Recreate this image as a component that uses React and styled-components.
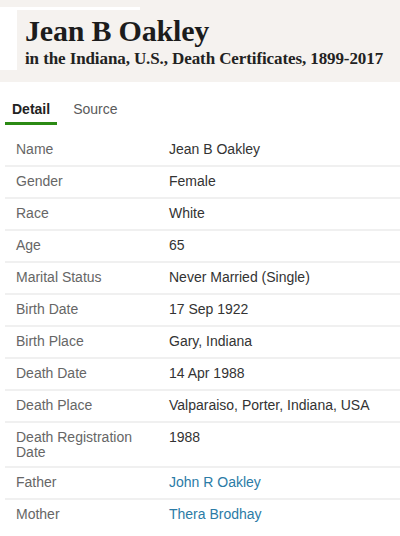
import React from "react";
import styled, { createGlobalStyle } from "styled-components";

const Global = createGlobalStyle`
  html, body { margin: 0; padding: 0; background: #ffffff; }
  body { font-family: "Liberation Sans", Arial, sans-serif; width: 400px; overflow: hidden; }
`;

const Page = styled.div`
  width: 400px;
  display: flex;
  flex-direction: column;
`;

const Header = styled.header`
  position: relative;
  background: #f5f2ef;
  height: 82px;
  box-sizing: border-box;
  padding: 14px 0 0 25px;
  display: flex;
  flex-direction: column;
  &::before {
    content: "";
    position: absolute;
    left: 0;
    top: 7px;
    width: 123px;
    height: 60px;
    border-top: 3px solid #ffffff;
    border-left: 17px solid #ffffff;
    pointer-events: none;
  }
`;

const Title = styled.h1`
  position: relative;
  margin: 0;
  font-family: "Liberation Serif", "Times New Roman", serif;
  font-weight: 700;
  font-size: 30px;
  line-height: 34px;
  color: #1c1c1c;
  letter-spacing: -0.2px;
`;

const Subtitle = styled.div`
  position: relative;
  font-family: "Liberation Serif", "Times New Roman", serif;
  font-weight: 700;
  font-size: 17px;
  line-height: 20px;
  color: #222222;
  margin-top: 1px;
  letter-spacing: -0.1px;
`;

const Tabs = styled.nav`
  display: flex;
  align-items: flex-end;
  gap: 9px;
  padding: 0 0 0 5px;
  height: 43px;
  box-sizing: border-box;
`;

const Tab = styled.div`
  padding: 0 7px 4px;
  font-size: 14px;
  line-height: 17px;
  font-weight: ${(p) => (p.$active ? 700 : 400)};
  color: ${(p) => (p.$active ? "#222222" : "#5a5a5a")};
  border-bottom: 3px solid ${(p) => (p.$active ? "#2b8a14" : "transparent")};
`;

const Table = styled.div`
  margin: 10px 0 0 5px;
  display: flex;
  flex-direction: column;
`;

const Row = styled.div`
  display: grid;
  grid-template-columns: 164px 1fr;
  min-height: 30px;
  border-bottom: ${(p) => (p.$last ? "0" : "2px solid #f0f0f0")};
`;

const Label = styled.div`
  padding: 7px 12px 6px 11px;
  font-size: 14px;
  line-height: 15px;
  color: #666666;
`;

const Value = styled.div`
  padding: 7px 8px 6px 0;
  font-size: 14px;
  line-height: 15px;
  color: ${(p) => (p.$link ? "#2b7ba6" : "#333333")};
`;

const rows = [
  ["Name", "Jean B Oakley"],
  ["Gender", "Female"],
  ["Race", "White"],
  ["Age", "65"],
  ["Marital Status", "Never Married (Single)"],
  ["Birth Date", "17 Sep 1922"],
  ["Birth Place", "Gary, Indiana"],
  ["Death Date", "14 Apr 1988"],
  ["Death Place", "Valparaiso, Porter, Indiana, USA"],
  ["Death Registration Date", "1988"],
  ["Father", "John R Oakley", true],
  ["Mother", "Thera Brodhay", true],
];

export default function App() {
  return (
    <Page>
      <Global />
      <Header>
        <Title>Jean B Oakley</Title>
        <Subtitle>in the Indiana, U.S., Death Certificates, 1899-2017</Subtitle>
      </Header>
      <Tabs>
        <Tab $active>Detail</Tab>
        <Tab>Source</Tab>
      </Tabs>
      <Table>
        {rows.map(([l, v, link], i) => (
          <Row key={l} $last={i === rows.length - 1}>
            <Label>{l}</Label>
            <Value $link={link}>{v}</Value>
          </Row>
        ))}
      </Table>
    </Page>
  );
}
